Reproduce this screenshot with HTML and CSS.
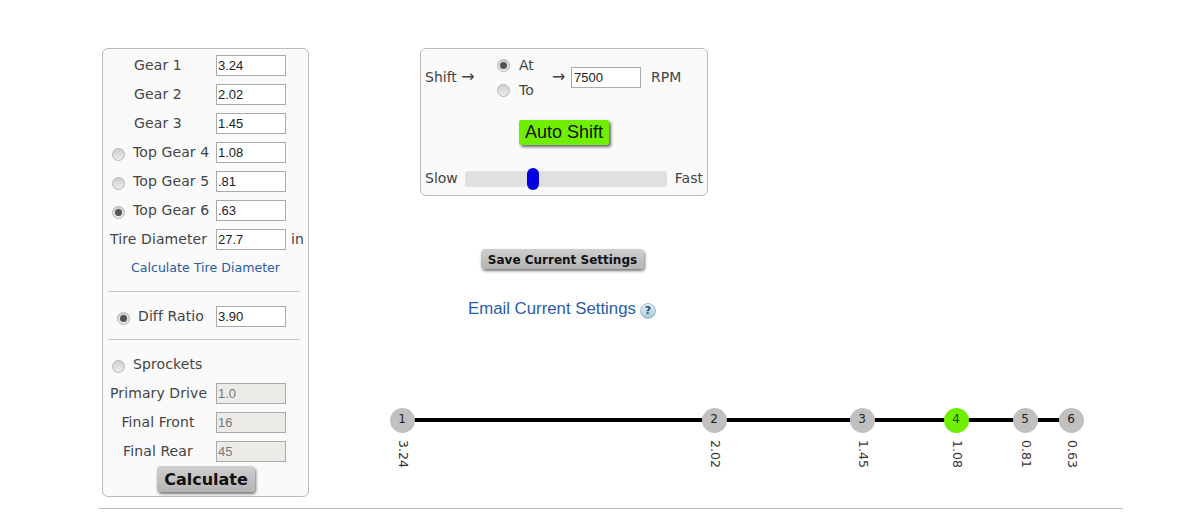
FILE: index.html
```html
<!DOCTYPE html>
<html lang="en">
<head>
<meta charset="utf-8">
<title>Gear Calculator</title>
<link rel="stylesheet" href="styles.css">
</head>
<body>
<div class="page">
  <form class="gears">
    <div class="row"><label class="lbl">Gear 1</label><input class="num" value="3.24"></div>
    <div class="row"><label class="lbl">Gear 2</label><input class="num" value="2.02"></div>
    <div class="row"><label class="lbl">Gear 3</label><input class="num" value="1.45"></div>
    <div class="row"><input type="radio" name="top" class="rad"><label class="lbl tight">Top Gear 4</label><input class="num" value="1.08"></div>
    <div class="row"><input type="radio" name="top" class="rad"><label class="lbl tight">Top Gear 5</label><input class="num" value=".81"></div>
    <div class="row"><input type="radio" name="top" class="rad" checked><label class="lbl tight">Top Gear 6</label><input class="num" value=".63"></div>
    <div class="row"><label class="lbl">Tire Diameter</label><input class="num" value="27.7"><span class="unit">in</span></div>
    <a class="tire-link" href="#">Calculate Tire Diameter</a>
    <hr class="sep">
    <div class="row diff"><input type="radio" name="drive" class="rad" checked><label class="lbl tight">Diff Ratio</label><input class="num" value="3.90"></div>
    <hr class="sep sep-b">
    <div class="row"><input type="radio" name="drive" class="rad"><label class="lbl tight">Sprockets</label></div>
    <div class="row"><label class="lbl">Primary Drive</label><input class="num off" value="1.0" disabled></div>
    <div class="row"><label class="lbl">Final Front</label><input class="num off" value="16" disabled></div>
    <div class="row"><label class="lbl">Final Rear</label><input class="num off" value="45" disabled></div>
    <button type="button" class="btn calc">Calculate</button>
  </form>

  <main class="main">
    <section class="shift">
      <div class="shift-top">
        <span class="shift-word">Shift <span class="arr">→</span></span>
        <div class="mode">
          <label class="mode-opt"><input type="radio" name="mode" class="rad" checked>At</label>
          <label class="mode-opt"><input type="radio" name="mode" class="rad">To</label>
        </div>
        <span class="arrow arr">→</span>
        <input class="num rpm-val" value="7500">
        <span class="rpm">RPM</span>
      </div>
      <button type="button" class="auto">Auto Shift</button>
      <div class="speed">
        <span>Slow</span>
        <input type="range" class="slider" min="0" max="100" value="33">
        <span>Fast</span>
      </div>
    </section>

    <button type="button" class="btn save">Save Current Settings</button>

    <div class="email"><a href="#">Email Current Settings</a><span class="help">?</span></div>

    <div class="chart">
      <div class="line"></div>
      <div class="node" style="left:22px"><span class="dot">1</span><span class="ratio">3.24</span></div>
      <div class="node" style="left:334px"><span class="dot">2</span><span class="ratio">2.02</span></div>
      <div class="node" style="left:482px"><span class="dot">3</span><span class="ratio">1.45</span></div>
      <div class="node" style="left:576px"><span class="dot on">4</span><span class="ratio">1.08</span></div>
      <div class="node" style="left:645px"><span class="dot">5</span><span class="ratio">0.81</span></div>
      <div class="node" style="left:691px"><span class="dot">6</span><span class="ratio">0.63</span></div>
    </div>
  </main>
</div>
<hr class="foot">
</body>
</html>
```
FILE: styles.css
```css
* { box-sizing: border-box; }
html, body { margin: 0; height: 519px; overflow: hidden; background: #fff; }
body { font-family: "DejaVu Sans", Verdana, sans-serif; font-size: 14px; color: #444; }

.page { display: flex; align-items: flex-start; padding: 48px 0 0 102px; }

.gears {
  width: 207px; height: 449px; padding-top: 2px;
  display: flex; flex-direction: column;
  background: #fafafa; border: 1px solid #bbb; border-radius: 6px;
}
.row { display: flex; align-items: center; height: 29px; padding-left: 7px; flex: none; }
.lbl { width: 96px; margin-right: 10px; padding-bottom: 2px; text-align: center; white-space: nowrap; letter-spacing: .1px; }
.row .tight { flex: none; width: 91px; margin-right: 0; padding-left: 8px; text-align: left; }
.num {
  width: 70px; height: 21px; padding: 0 1px; margin: 0;
  font: 13px "Liberation Sans", Arial, sans-serif; color: #222;
  background: #fff; border: 1px solid #aaa; border-radius: 0; outline: 0;
}
.rpm-val { padding-left: 2px; }
.off { background: #ecebe8; color: #777; }
.unit { margin-left: 5px; padding-bottom: 2px; }
.rad {
  appearance: none; flex: none; width: 13px; height: 13px; margin: 3px 0 0 2px; position: relative;
  border-radius: 50%; border: 1px solid #b4b4b4;
  background: linear-gradient(#d0d0d0, #ececec);
}
.rad:checked::after {
  content: ""; position: absolute; left: 2px; top: 2px; width: 7px; height: 7px;
  border-radius: 50%; background: #555;
}
.tire-link { margin-top: 4px; text-align: center; font-size: 12.6px; line-height: 20px; color: #2a5ca8; text-decoration: none; }
.sep { width: 192px; height: 1px; margin: 13px 0 0 5px; border: 0; background: #c4c4c4; }
.diff { margin-top: 10px; }
.diff .rad { margin-left: 7px; }
.diff .tight { width: 86px; }
.sep-b { margin-top: 8px; }
.sep-b + .row { margin-top: 10px; }
.btn {
  padding: 0; border: 0; border-radius: 4px; color: #111; font-family: "DejaVu Sans", Verdana, sans-serif; font-weight: 700;
  background: linear-gradient(#cfcfcf, #b4b4b4);
  box-shadow: 1px 2px 3px #777;
}
.calc { width: 98px; height: 26px; margin: 0 0 0 54px; font-size: 16px; flex: none; }

.main { width: 720px; display: flex; flex-direction: column; align-items: flex-start; margin-left: 71px; }

.shift {
  width: 288px; height: 148px; margin-left: 40px; padding: 0 4px;
  display: flex; flex-direction: column;
  background: #fafafa; border: 1px solid #bbb; border-radius: 6px;
}
.shift-top { display: flex; align-items: center; height: 56px; flex: none; }
.shift-word { width: 71px; white-space: nowrap; }
.arr { font-size: 16px; line-height: 14px; }
.mode { display: flex; flex-direction: column; gap: 10px; width: 56px; }
.mode-opt { display: flex; align-items: center; height: 15px; gap: 9px; }
.mode .rad { margin: 2px 0 0 1px; }
.arrow { width: 19px; }
.rpm { margin-left: 10px; }
.auto {
  width: 90px; height: 25px; margin: 15px 0 0 94px; padding: 0; flex: none;
  font: 18px "Liberation Sans", Arial, sans-serif; color: #111;
  background: #70f000; border: 0; border-radius: 2px; box-shadow: 2px 2px 3px #667;
}
.speed { display: flex; align-items: center; margin-top: 24px; }
.slider {
  appearance: none; width: 202px; height: 16px; margin: 2px 8px 0 7px; flex: none;
  background: #e0e0e0; border-radius: 3px;
}
.slider::-webkit-slider-thumb {
  appearance: none; width: 12px; height: 22px; border-radius: 6px; background: #0000e0; border: 0;
}

.save { width: 163px; height: 20px; margin: 53px 0 0 101px; padding-top: 1px; font-size: 12px; }

.email {
  display: flex; align-items: center; margin: 29px 0 0 88px;
  font: 16.8px/22px "Liberation Sans", Arial, sans-serif;
}
.email a { color: #2a5ca8; text-decoration: none; }
.help {
  width: 16px; height: 16px; margin: 3px 0 0 4px; border-radius: 50%;
  border: 1px solid #9fbccb; background: linear-gradient(#e6f0f6, #a9c8d8);
  font: bold 11px/14px "DejaVu Sans", sans-serif; color: #25506b; text-align: center;
}

.chart { position: relative; width: 720px; height: 70px; margin-top: 85px; }
.line { position: absolute; left: 22px; width: 669px; top: 13px; height: 4px; background: #000; }
.node { position: absolute; top: 2.5px; width: 0; }
.dot {
  position: absolute; left: -12.5px; top: 0; width: 25px; height: 25px; border-radius: 50%;
  background: #c0c0c0; color: #222; font-size: 12px; line-height: 23px; text-align: center;
}
.dot.on { background: #70f000; color: #1a4a00; }
.ratio {
  position: absolute; left: -7px; top: 32px; width: 16px; line-height: 16px;
  writing-mode: vertical-rl; font-size: 12.5px; color: #333; white-space: nowrap;
}

.foot { width: 1024px; height: 1px; margin: 0 0 0 99px; border: 0; background: #bbb; position: absolute; top: 508px; }
```
